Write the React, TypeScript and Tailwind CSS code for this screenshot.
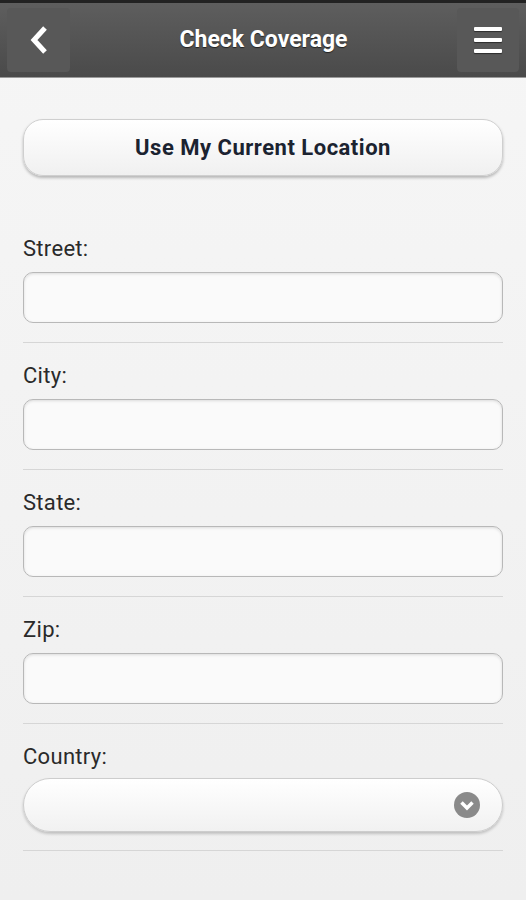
import { FC } from "react";

const fields = ["Street:", "City:", "State:", "Zip:"];

const Field: FC<{ label: string }> = ({ label }) => (
    <div className="pt-[21px]">
        <div className="h-[24px] leading-[24px] text-[22px] tracking-[0.3px] text-[#2a2a2a]">{label}</div>
        <div className="mt-[11px] h-[51px] rounded-[10px] border border-[#b8b8b8] bg-[#fafafa] shadow-[inset_0_1px_3px_rgba(0,0,0,0.12)]" />
        <div className="mt-[19px] h-px bg-[#d6d6d6]" />
    </div>
);

export default function App() {
    return (
        <div className="w-[526px] h-[900px] bg-gradient-to-b from-[#f6f6f6] to-[#efefef] font-['Roboto',sans-serif] overflow-hidden">
            <div className="h-[3px] bg-[#222]" />
            <div className="h-[74px] bg-gradient-to-b from-[#5e5e5e] to-[#4a4a4a] flex items-center justify-between px-[7px]">
                <div className="w-[63px] h-[64px] rounded-[4px] bg-[#585858] flex items-center justify-center">
                    <svg width="22" height="32" viewBox="0 0 22 32">
                        <path d="M17 4 L6 16 L17 28" fill="none" stroke="#fff" strokeWidth="5" />
                    </svg>
                </div>
                <div className="text-white font-bold text-[23px] [text-shadow:0_1px_1px_rgba(0,0,0,0.6)]">Check Coverage</div>
                <div className="w-[62px] h-[64px] rounded-[4px] bg-[#585858] flex flex-col items-center justify-center gap-[7px]">
                    <div className="w-[28px] h-[4px] bg-white rounded-[1px] shadow-[0_1px_1px_rgba(0,0,0,0.5)]" />
                    <div className="w-[28px] h-[4px] bg-white rounded-[1px] shadow-[0_1px_1px_rgba(0,0,0,0.5)]" />
                    <div className="w-[28px] h-[4px] bg-white rounded-[1px] shadow-[0_1px_1px_rgba(0,0,0,0.5)]" />
                </div>
            </div>
            <div className="h-px bg-[#9a9a9a]" />
            <div className="px-[23px]">
                <button className="mt-[41px] w-full h-[57px] rounded-[20px] border border-[#cfcfcf] bg-gradient-to-b from-white to-[#f0f0f0] shadow-[0_2px_3px_rgba(0,0,0,0.25)] text-[22px] tracking-[0.5px] font-bold text-[#1b2330]">
                    Use My Current Location
                </button>
                <div className="mt-[40px]">
                    {fields.map((f, i) => (
                        <Field key={i} label={f} />
                    ))}
                    <div className="pt-[21px]">
                        <div className="h-[24px] leading-[24px] text-[22px] tracking-[0.3px] text-[#2a2a2a]">Country:</div>
                        <div className="mt-[9px] h-[54px] rounded-[27px] border border-[#cdcdcd] bg-gradient-to-b from-white to-[#f1f1f1] shadow-[0_2px_3px_rgba(0,0,0,0.2)] flex items-center justify-end pr-[22px]">
                            <svg width="26" height="26" viewBox="0 0 26 26">
                                <circle cx="13" cy="13" r="13" fill="#8a8a8a" />
                                <path d="M7.5 10.5 L13 16 L18.5 10.5" fill="none" stroke="#fff" strokeWidth="3.5" />
                            </svg>
                        </div>
                        <div className="mt-[18px] h-px bg-[#d6d6d6]" />
                    </div>
                </div>
            </div>
        </div>
    );
}
